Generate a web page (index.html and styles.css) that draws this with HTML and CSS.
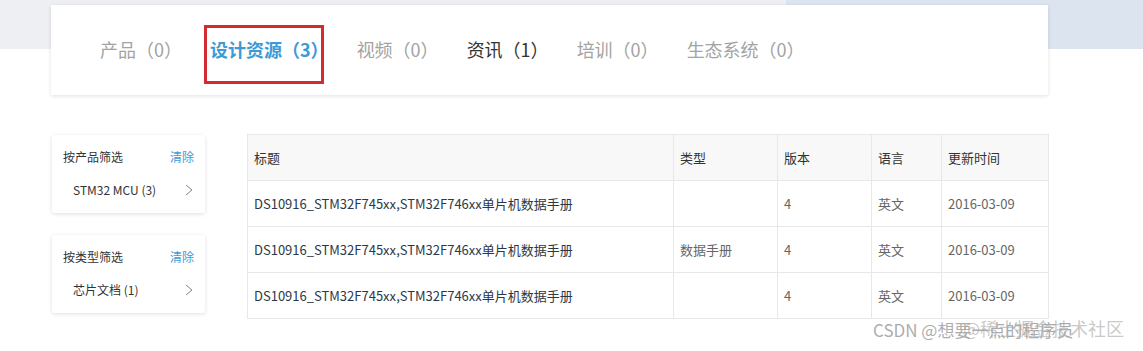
FILE: index.html
```html
<!DOCTYPE html>
<html lang="zh-CN">
<head>
<meta charset="utf-8">
<link rel="stylesheet" href="styles.css">
</head>
<body>
<div class="page">
  <div class="tabs-card">
    <div class="tab">产品（0）</div>
    <div class="tab tab-active">设计资源（3）<span class="mark"></span></div>
    <div class="tab">视频（0）</div>
    <div class="tab tab-dark">资讯（1）</div>
    <div class="tab">培训（0）</div>
    <div class="tab">生态系统（0）</div>
  </div>
  <div class="content">
    <div class="sidebar">
      <div class="filter">
        <div class="filter-head"><span>按产品筛选</span><span class="clear">清除</span></div>
        <div class="filter-item"><span>STM32 MCU (3)</span><svg class="chev" width="8" height="12" viewBox="0 0 8 12"><path d="M1 1 L7 6 L1 11" fill="none" stroke="#888" stroke-width="1"/></svg></div>
      </div>
      <div class="filter">
        <div class="filter-head"><span>按类型筛选</span><span class="clear">清除</span></div>
        <div class="filter-item"><span>芯片文档 (1)</span><svg class="chev" width="8" height="12" viewBox="0 0 8 12"><path d="M1 1 L7 6 L1 11" fill="none" stroke="#888" stroke-width="1"/></svg></div>
      </div>
    </div>
    <table class="docs">
      <colgroup><col class="c1"><col class="c2"><col class="c3"><col class="c4"><col class="c5"></colgroup>
      <thead>
        <tr><th>标题</th><th>类型</th><th>版本</th><th>语言</th><th>更新时间</th></tr>
      </thead>
      <tbody>
        <tr><td class="title">DS10916_STM32F745xx,STM32F746xx单片机数据手册</td><td></td><td>4</td><td>英文</td><td>2016-03-09</td></tr>
        <tr><td class="title">DS10916_STM32F745xx,STM32F746xx单片机数据手册</td><td>数据手册</td><td>4</td><td>英文</td><td>2016-03-09</td></tr>
        <tr><td class="title">DS10916_STM32F745xx,STM32F746xx单片机数据手册</td><td></td><td>4</td><td>英文</td><td>2016-03-09</td></tr>
      </tbody>
    </table>
  </div>
  <div class="watermark"><span class="wm1">CSDN @想要一点的程序员</span><span class="wm2">@稀土掘金技术社区</span></div>
</div>
</body>
</html>
```
FILE: styles.css
```css
* { box-sizing: border-box; }
html, body { margin: 0; padding: 0; background: #fff; }
body {
  font-family: "Microsoft YaHei", "Noto Sans CJK SC", "Noto Sans", sans-serif;
  width: 1143px;
  height: 351px;
  overflow: hidden;
}
.page {
  position: relative;
  height: 351px;
  padding-top: 5px;
  background:
    linear-gradient(to right, #eeeff3 0, #eeeff3 786px, #dbe4ef 786px, #dbe4ef 100%) no-repeat;
  background-size: 100% 49px;
}
.tabs-card {
  margin-left: 51px;
  width: 997px;
  height: 90px;
  background: #fff;
  box-shadow: 0 1px 4px rgba(0, 0, 0, 0.12);
  display: flex;
  align-items: center;
  padding: 0 0 2px 49px;
  gap: 28px;
}
.tab {
  position: relative;
  font-size: 18px;
  line-height: 24px;
  color: #a3a3a3;
  white-space: nowrap;
}
.tab-active { color: #3d9ad6; font-weight: bold; }
.tab-dark { color: #333; }
.mark {
  position: absolute;
  left: -6px;
  top: -12px;
  width: 120px;
  height: 59px;
  border: 3px solid #d52a33;
}
.content {
  display: flex;
  align-items: flex-start;
  margin-top: 40px;
  margin-left: 52px;
  gap: 42px;
}
.sidebar {
  width: 153px;
  display: flex;
  flex-direction: column;
  gap: 22px;
}
.filter {
  height: 78px;
  background: #fff;
  box-shadow: 0 1px 4px rgba(0, 0, 0, 0.13);
  border-radius: 2px;
  padding: 12px 11px 13px 11px;
  font-size: 12px;
  color: #333;
}
.filter-head {
  display: flex;
  justify-content: space-between;
  line-height: 20px;
}
.clear { color: #3d9ad6; }
.filter-item {
  display: flex;
  justify-content: space-between;
  align-items: center;
  line-height: 20px;
  margin-top: 13px;
  padding-left: 10px;
  padding-right: 1px;
}
.chev { display: block; }
.docs {
  width: 801px;
  margin-top: -1px;
  border-collapse: collapse;
  font-size: 13px;
  table-layout: fixed;
}
.c1 { width: 426px; }
.c2 { width: 104px; }
.c3 { width: 94px; }
.c4 { width: 70px; }
.c5 { width: 107px; }
.docs th, .docs td {
  border: 1px solid #e8e8e8;
  height: 46px;
  padding: 0 0 1px 6px;
  text-align: left;
  font-weight: normal;
  white-space: nowrap;
}
.docs th { background: #f8f8f8; color: #333; }
.docs td { color: #666; }
.docs td.title { color: #2c3846; }
.watermark {
  position: absolute;
  left: 873px;
  top: 318px;
  font-size: 17px;
  line-height: 24px;
  white-space: nowrap;
  font-family: "Noto Sans CJK SC", sans-serif;
}
.wm1 { color: rgba(150, 150, 150, 0.8); }
.wm2 {
  position: absolute;
  left: 90px;
  top: -2px;
  font-size: 18px;
  color: rgba(165, 165, 165, 0.6);
}
```
